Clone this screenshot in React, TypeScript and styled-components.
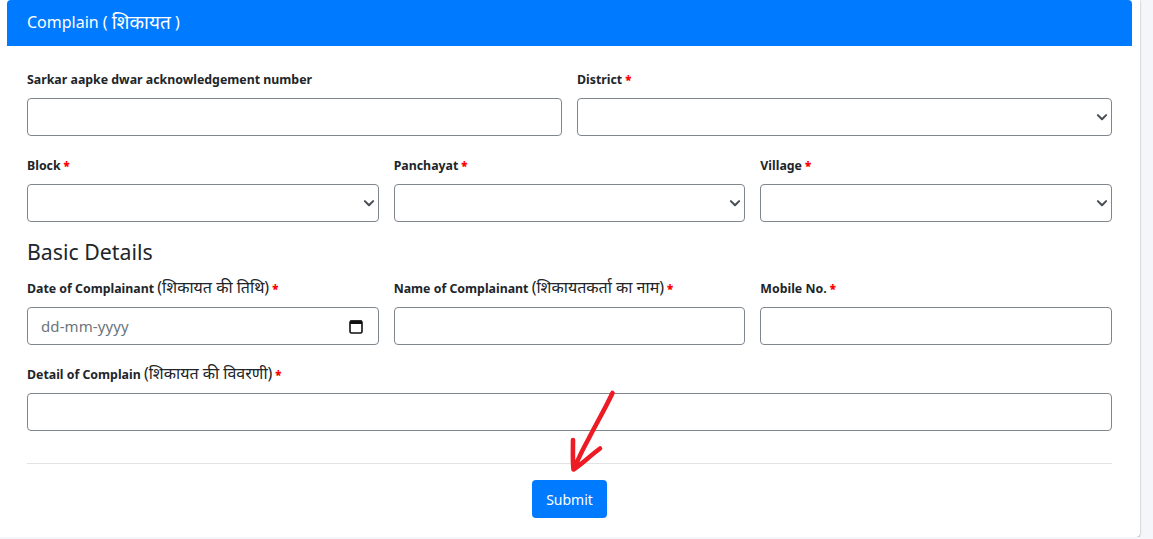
import styled, { createGlobalStyle } from 'styled-components';

const chevron =
    "data:image/svg+xml,%3csvg xmlns='http://www.w3.org/2000/svg' viewBox='0 0 16 16'%3e%3cpath fill='none' stroke='%234a4f55' stroke-linecap='round' stroke-linejoin='round' stroke-width='2.8' d='M2.5 5.5 8 11l5.5-5.5'/%3e%3c/svg%3e";

const GlobalStyle = createGlobalStyle`
    * {
        box-sizing: border-box;
    }
    body {
        margin: 0;
        background: #f4f6f9;
        color: #212529;
        font-family: 'Noto Sans', 'Open Sans', 'Noto Sans CJK SC', sans-serif;
    }
`;

const Card = styled.div`
    position: relative;
    width: 1140px;
    height: 537px;
    padding: 0 8px 0 7px;
    background: #fff;
    border-radius: 0 0 4px 0;
    box-shadow: 0 0 1px rgba(0, 0, 0, 0.2), 0 1px 2px rgba(0, 0, 0, 0.3);
`;

const CardHeader = styled.div`
    height: 46px;
    padding: 0 20px 3px;
    display: flex;
    align-items: center;
    gap: 4px;
    background: #007bff;
    border-radius: 4px 4px 0 0;
    color: #fff;
    font-size: 16px;
    & > span {
        font-size: 19px;
    }
`;

const CardBody = styled.form`
    padding: 24px 20px 0;
`;

const Row = styled.div<{ $cols: number; $mb?: number }>`
    display: grid;
    grid-template-columns: repeat(${(p) => p.$cols}, 1fr);
    column-gap: 15px;
    margin-bottom: ${(p) => p.$mb ?? 20}px;
`;

const Field = styled.div`
    position: relative;
`;

const Label = styled.label`
    display: block;
    height: 19px;
    margin-bottom: 9px;
    font-size: 12.35px;
    line-height: 19px;
    font-weight: 700;
    white-space: nowrap;
    & > span {
        font-weight: 400;
        font-size: 16px;
        line-height: 15px;
    }
    & > b {
        color: #ff0000;
        font-size: 11.5px;
    }
`;

const Input = styled.input`
    display: block;
    width: 100%;
    height: 38px;
    padding: 6px 13px;
    border: 1px solid #80868e;
    border-radius: 4px;
    background: #fff;
    font-family: inherit;
    font-size: 15px;
    letter-spacing: 0.1px;
    &::placeholder {
        color: #6c757d;
    }
`;

const Select = styled.select`
    display: block;
    width: 100%;
    height: 38px;
    padding: 6px 12px;
    border: 1px solid #80868e;
    border-radius: 4px;
    appearance: none;
    background: #fff url("${chevron}") no-repeat right 3px center / 12px 12px;
    font-family: inherit;
    font-size: 14px;
`;

const CalendarIcon = styled.svg`
    position: absolute;
    right: 16px;
    bottom: 11px;
`;

const SectionTitle = styled.h4`
    margin: 0 0 14px;
    height: 26px;
    font-size: 21.3px;
    line-height: 26px;
    font-weight: 400;
`;

const Divider = styled.hr`
    margin: 32px 0 16px;
    border: 0;
    border-top: 1px solid #e2e3e4;
`;

const Actions = styled.div`
    display: flex;
    justify-content: center;
`;

const SubmitButton = styled.button`
    width: 75px;
    height: 38px;
    border: 0;
    border-radius: 4px;
    background: #007bff;
    color: #fff;
    font-family: inherit;
    font-size: 14px;
`;

const Arrow = styled.svg`
    position: absolute;
    left: 565px;
    top: 388px;
`;

const Star = () => <b> *</b>;

const App = () => {
    return (
        <>
            <GlobalStyle />
            <Card>
                <CardHeader>
                    Complain ( <span>शिकायत</span> )
                </CardHeader>
                <CardBody>
                    <Row $cols={2}>
                        <Field>
                            <Label>Sarkar aapke dwar acknowledgement number</Label>
                            <Input type="text" />
                        </Field>
                        <Field>
                            <Label>
                                District
                                <Star />
                            </Label>
                            <Select />
                        </Field>
                    </Row>
                    <Row $cols={3} $mb={17}>
                        <Field>
                            <Label>
                                Block
                                <Star />
                            </Label>
                            <Select />
                        </Field>
                        <Field>
                            <Label>
                                Panchayat
                                <Star />
                            </Label>
                            <Select />
                        </Field>
                        <Field>
                            <Label>
                                Village
                                <Star />
                            </Label>
                            <Select />
                        </Field>
                    </Row>
                    <SectionTitle>Basic Details</SectionTitle>
                    <Row $cols={3}>
                        <Field>
                            <Label>
                                Date of Complainant <span>(शिकायत की तिथि)</span>
                                <Star />
                            </Label>
                            <Input type="text" placeholder="dd-mm-yyyy" />
                            <CalendarIcon width="14" height="15" viewBox="0 0 14 15" fill="none">
                                <rect x="1" y="2" width="12" height="12" rx="1.5" stroke="#111" strokeWidth="1.6" />
                                <rect x="1" y="1.5" width="12" height="3.5" fill="#111" />
                            </CalendarIcon>
                        </Field>
                        <Field>
                            <Label>
                                Name of Complainant <span>(शिकायतकर्ता का नाम)</span>
                                <Star />
                            </Label>
                            <Input type="text" />
                        </Field>
                        <Field>
                            <Label>
                                Mobile No.
                                <Star />
                            </Label>
                            <Input type="text" />
                        </Field>
                    </Row>
                    <Row $cols={1}>
                        <Field>
                            <Label>
                                Detail of Complain <span>(शिकायत की विवरणी)</span>
                                <Star />
                            </Label>
                            <Input type="text" />
                        </Field>
                    </Row>
                    <Divider />
                    <Actions>
                        <SubmitButton type="button">Submit</SubmitButton>
                    </Actions>
                </CardBody>
                <Arrow width="54" height="88" viewBox="0 0 54 88" fill="none">
                    <path
                        d="M47.5 5 C40 21 30 38 24 50 C18 61 13 71 9 81 M8 52 C8 62 7.5 72 8.5 81.5 C17 76 26 67 35 60.5"
                        stroke="#ed1c24"
                        strokeWidth="4.6"
                        strokeLinecap="round"
                        strokeLinejoin="round"
                    />
                </Arrow>
            </Card>
        </>
    );
};

export default App;
